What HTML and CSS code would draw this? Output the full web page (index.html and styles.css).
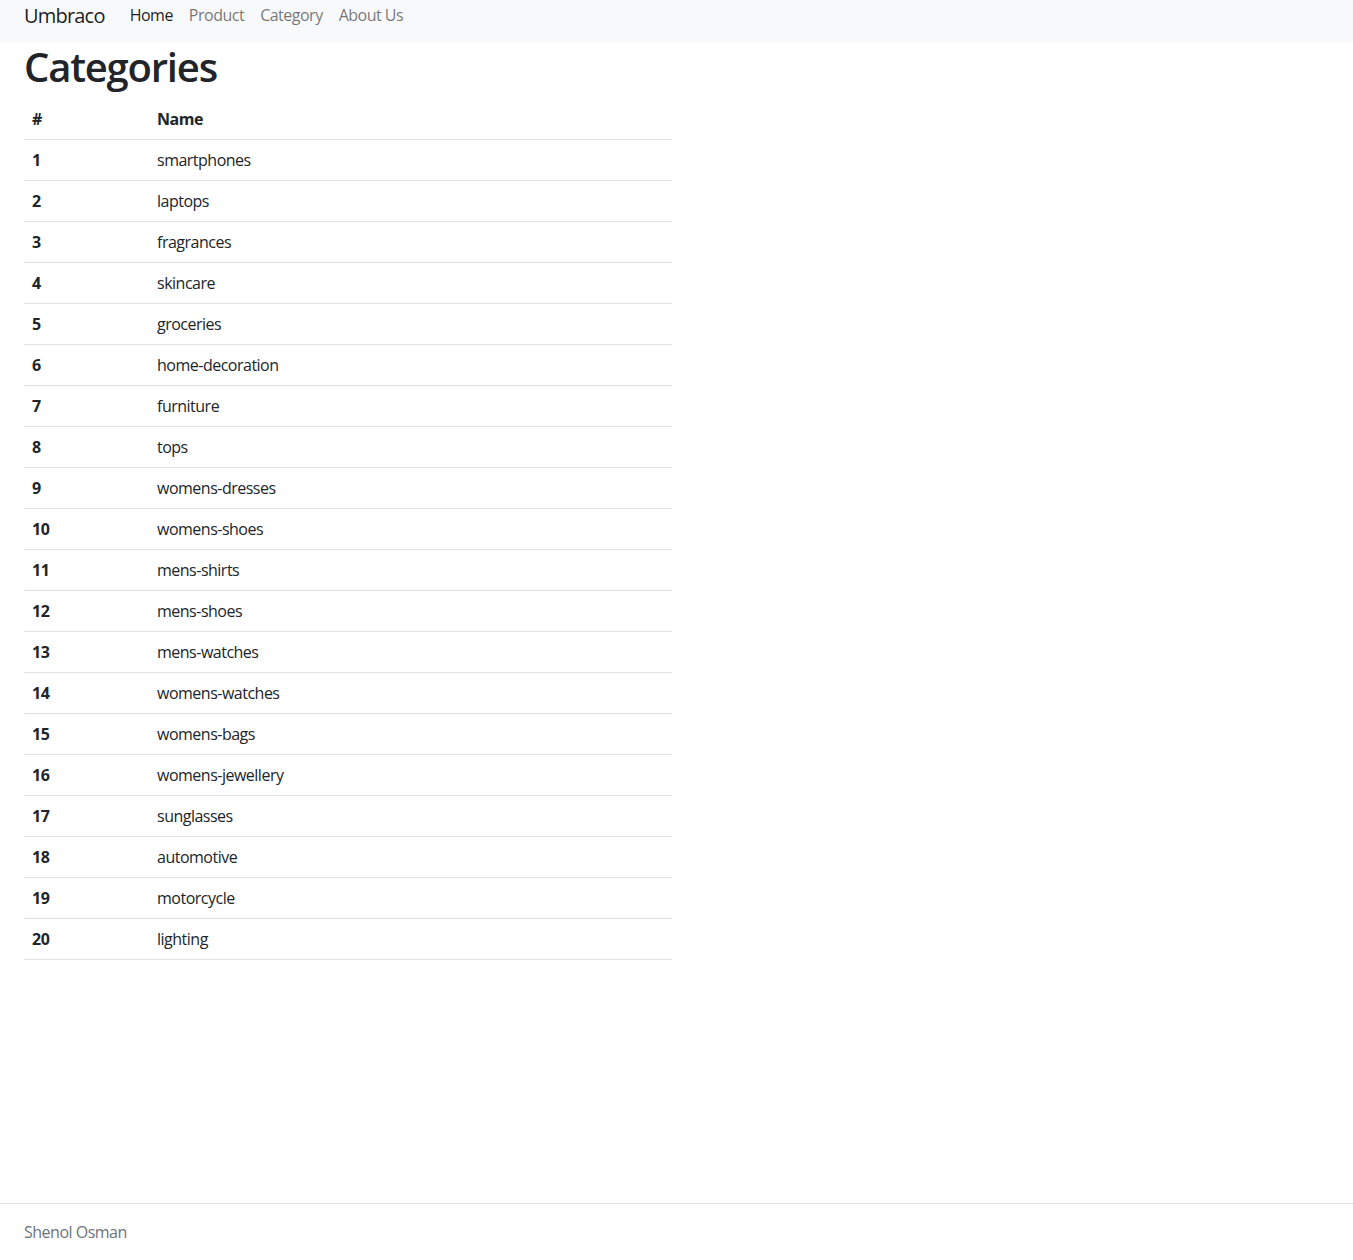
FILE: index.html
```html
<!DOCTYPE html>
<html lang="en">
<head>
<meta charset="utf-8">
<title>Categories - Umbraco</title>
<link rel="stylesheet" href="styles.css">
</head>
<body>
<header class="navbar">
  <a class="brand" href="#">Umbraco</a>
  <nav class="nav">
    <a class="nav-link active" href="#">Home</a>
    <a class="nav-link" href="#">Product</a>
    <a class="nav-link" href="#">Category</a>
    <a class="nav-link" href="#">About Us</a>
  </nav>
</header>
<main class="main">
  <h1 class="title">Categories</h1>
  <table class="table">
    <colgroup><col class="col-id"><col></colgroup>
    <thead>
      <tr><th>#</th><th>Name</th></tr>
    </thead>
    <tbody>
      <tr><th>1</th><td>smartphones</td></tr>
      <tr><th>2</th><td>laptops</td></tr>
      <tr><th>3</th><td>fragrances</td></tr>
      <tr><th>4</th><td>skincare</td></tr>
      <tr><th>5</th><td>groceries</td></tr>
      <tr><th>6</th><td>home-decoration</td></tr>
      <tr><th>7</th><td>furniture</td></tr>
      <tr><th>8</th><td>tops</td></tr>
      <tr><th>9</th><td>womens-dresses</td></tr>
      <tr><th>10</th><td>womens-shoes</td></tr>
      <tr><th>11</th><td>mens-shirts</td></tr>
      <tr><th>12</th><td>mens-shoes</td></tr>
      <tr><th>13</th><td>mens-watches</td></tr>
      <tr><th>14</th><td>womens-watches</td></tr>
      <tr><th>15</th><td>womens-bags</td></tr>
      <tr><th>16</th><td>womens-jewellery</td></tr>
      <tr><th>17</th><td>sunglasses</td></tr>
      <tr><th>18</th><td>automotive</td></tr>
      <tr><th>19</th><td>motorcycle</td></tr>
      <tr><th>20</th><td>lighting</td></tr>
    </tbody>
  </table>
</main>
<footer class="footer">Shenol Osman</footer>
</body>
</html>
```
FILE: styles.css
```css
* { box-sizing: border-box; }
html, body { margin: 0; padding: 0; }
body {
  font-family: "Open Sans", "Noto Sans", sans-serif;
  font-size: 16px;
  line-height: 1.5;
  letter-spacing: -0.5px;
  color: #212529;
  background: #fff;
  min-height: 100vh;
  display: flex;
  flex-direction: column;
}
a { text-decoration: none; }
.navbar {
  height: 43px;
  background: #f8f9fa;
  display: flex;
  align-items: flex-start;
  padding: 0 24px;
}
.brand {
  font-size: 20px;
  line-height: 30px;
  letter-spacing: -0.8px;
  color: rgba(0,0,0,0.9);
  margin-right: 17px;
  padding-top: 1px;
}
.nav { display: flex; }
.nav-link {
  padding: 3px 8px 0;
  line-height: 24px;
  color: rgba(0,0,0,0.55);
}
.nav-link.active { color: rgba(0,0,0,0.9); }
.main { padding: 0 24px; flex: 1; }
.title {
  margin: 0 0 8px;
  font-size: 40px;
  line-height: 48px;
  font-weight: 600;
  letter-spacing: -1.2px;
}
.table {
  width: 648px;
  table-layout: fixed;
  border-collapse: collapse;
  margin-bottom: 16px;
}
.table th, .table td {
  padding: 8px;
  line-height: 24px;
  border-bottom: 1px solid #dee2e6;
  text-align: left;
  vertical-align: top;
}
.table th { font-weight: 700; }
.table td { font-weight: 400; }
.col-id { width: 125px; }
.footer {
  border-top: 1px solid #dee2e6;
  line-height: 56px;
  padding: 0 24px;
  color: #6c757d;
  white-space: nowrap;
}
```
